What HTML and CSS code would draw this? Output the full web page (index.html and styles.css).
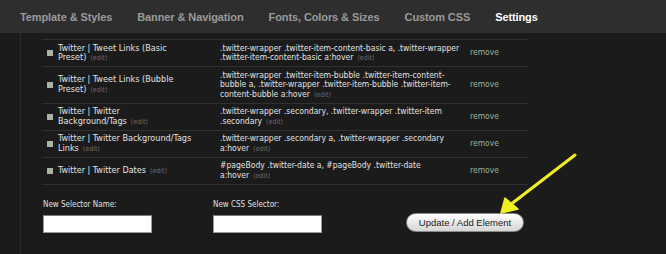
FILE: index.html
```html
<!DOCTYPE html>
<html>
<head>
<meta charset="utf-8">
<link rel="stylesheet" href="styles.css">
</head>
<body>
<div class="nav">
  <span class="tab">Template &amp; Styles</span>
  <span class="tab">Banner &amp; Navigation</span>
  <span class="tab">Fonts, Colors &amp; Sizes</span>
  <span class="tab">Custom CSS</span>
  <span class="tab active">Settings</span>
</div>
<div class="main">
  <div class="rail"></div>
  <div class="content">
    <table class="list">
      <tr>
        <td class="sq"><span class="box"></span></td>
        <td class="name">Twitter | Tweet Links (Basic <span class="nw">Preset)<span class="edit">(edit)</span></span></td>
        <td class="sel">.twitter-wrapper .twitter-item-content-basic a, .twitter-wrapper .twitter-item-content-basic <span class="nw">a:hover<span class="edit">(edit)</span></span></td>
        <td class="rm">remove</td>
      </tr>
      <tr>
        <td class="sq"><span class="box"></span></td>
        <td class="name">Twitter | Tweet Links (Bubble <span class="nw">Preset)<span class="edit">(edit)</span></span></td>
        <td class="sel">.twitter-wrapper .twitter-item-bubble .twitter-item-content-bubble a, .twitter-wrapper .twitter-item-bubble .twitter-item-content-bubble <span class="nw">a:hover<span class="edit">(edit)</span></span></td>
        <td class="rm">remove</td>
      </tr>
      <tr>
        <td class="sq"><span class="box"></span></td>
        <td class="name">Twitter | Twitter <span class="nw">Background/Tags<span class="edit">(edit)</span></span></td>
        <td class="sel">.twitter-wrapper .secondary, .twitter-wrapper .twitter-item <span class="nw">.secondary<span class="edit">(edit)</span></span></td>
        <td class="rm">remove</td>
      </tr>
      <tr>
        <td class="sq"><span class="box"></span></td>
        <td class="name">Twitter | Twitter Background/Tags <span class="nw">Links<span class="edit">(edit)</span></span></td>
        <td class="sel">.twitter-wrapper .secondary a, .twitter-wrapper .secondary <span class="nw">a:hover<span class="edit">(edit)</span></span></td>
        <td class="rm">remove</td>
      </tr>
      <tr>
        <td class="sq"><span class="box"></span></td>
        <td class="name">Twitter | Twitter <span class="nw">Dates<span class="edit">(edit)</span></span></td>
        <td class="sel">#pageBody .twitter-date a, #pageBody .twitter-date <span class="nw">a:hover<span class="edit">(edit)</span></span></td>
        <td class="rm">remove</td>
      </tr>
    </table>
    <div class="form">
      <div class="field f1">
        <label class="lbl">New Selector Name:</label>
        <input class="inp" type="text">
      </div>
      <div class="field f2">
        <label class="lbl">New CSS Selector:</label>
        <input class="inp" type="text">
      </div>
      <button class="btn">Update / Add Element</button>
    </div>
  </div>
</div>
<svg class="arrow" width="666" height="254" viewBox="0 0 666 254">
  <line x1="575" y1="155" x2="510" y2="205" stroke="#f1ee22" stroke-width="3" stroke-linecap="round"/>
  <polygon points="501,213 505,198 518,209" fill="#f1ee22" stroke="#f1ee22" stroke-width="1.5" stroke-linejoin="round"/>
</svg>
</body>
</html>
```
FILE: styles.css
```css
html, body {
  margin: 0;
  padding: 0;
}
body {
  background: #1b1b1b;
  width: 666px;
  height: 254px;
  overflow: hidden;
  position: relative;
  font-family: "DejaVu Sans Condensed", "Liberation Sans", sans-serif;
}
.nav {
  height: 33px;
  background: #2e2e2e;
  display: flex;
  align-items: center;
  padding-left: 20px;
  gap: 25px;
  font-family: "Liberation Sans", Arial, sans-serif;
  font-weight: bold;
  font-size: 11px;
  letter-spacing: -0.1px;
}
.tab {
  color: #9a9a9a;
}
.tab.active {
  color: #ffffff;
}
.main {
  display: flex;
  height: 221px;
}
.rail {
  width: 20px;
  border-right: 1px solid #2b2b2b;
  flex: none;
}
.content {
  padding-left: 21px;
  padding-top: 6px;
}
.list {
  border-collapse: collapse;
  width: 486px;
  table-layout: fixed;
  border-top: 1px solid #303030;
  font-size: 8.5px;
  line-height: 9.5px;
  color: #e2e2e2;
}
.list tr {
  border-bottom: 1px solid #303030;
}
.list td {
  vertical-align: middle;
  padding: 3.5px 0;
  height: 19px;
  box-sizing: content-box;
}
.nw {
  white-space: nowrap;
}
.sq {
  width: 16px;
}
.box {
  display: block;
  width: 6px;
  height: 6px;
  margin-left: 5px;
  background: #aab3a2;
}
.name {
  width: 144px;
  font-size: 9px;
  padding-right: 18px !important;
}
.sel {
  width: 242px;
  padding-right: 5px !important;
}
.rm {
  color: #9fb092;
  padding-left: 3px !important;
}
.edit {
  color: #6c6c6c;
  font-size: 7px;
  line-height: 0;
  margin-left: 4px;
}
.form {
  display: flex;
  align-items: flex-end;
  margin-top: 15px;
  padding-left: 1px;
}
.field {
  display: flex;
  flex-direction: column;
  gap: 5px;
}
.f2 {
  margin-left: 61px;
}
.lbl {
  font-size: 8px;
  line-height: 10px;
  color: #e0e0e0;
}
.inp {
  box-sizing: border-box;
  width: 109px;
  height: 18px;
  margin: 0;
  background: #fff;
  border: 1px solid #9a9a9a;
  border-top-color: #7a7a7a;
}
.btn {
  box-sizing: border-box;
  margin: 0 0 1px 84px;
  width: 118px;
  height: 19px;
  border-radius: 10px;
  border: 1px solid #8a8a8a;
  background: linear-gradient(#ffffff, #e9e9e9 50%, #d6d6d6);
  font-family: "Liberation Sans", Arial, sans-serif;
  font-size: 9.5px;
  color: #222;
  padding: 0;
}
.arrow {
  position: absolute;
  left: 0;
  top: 0;
  pointer-events: none;
}
```
